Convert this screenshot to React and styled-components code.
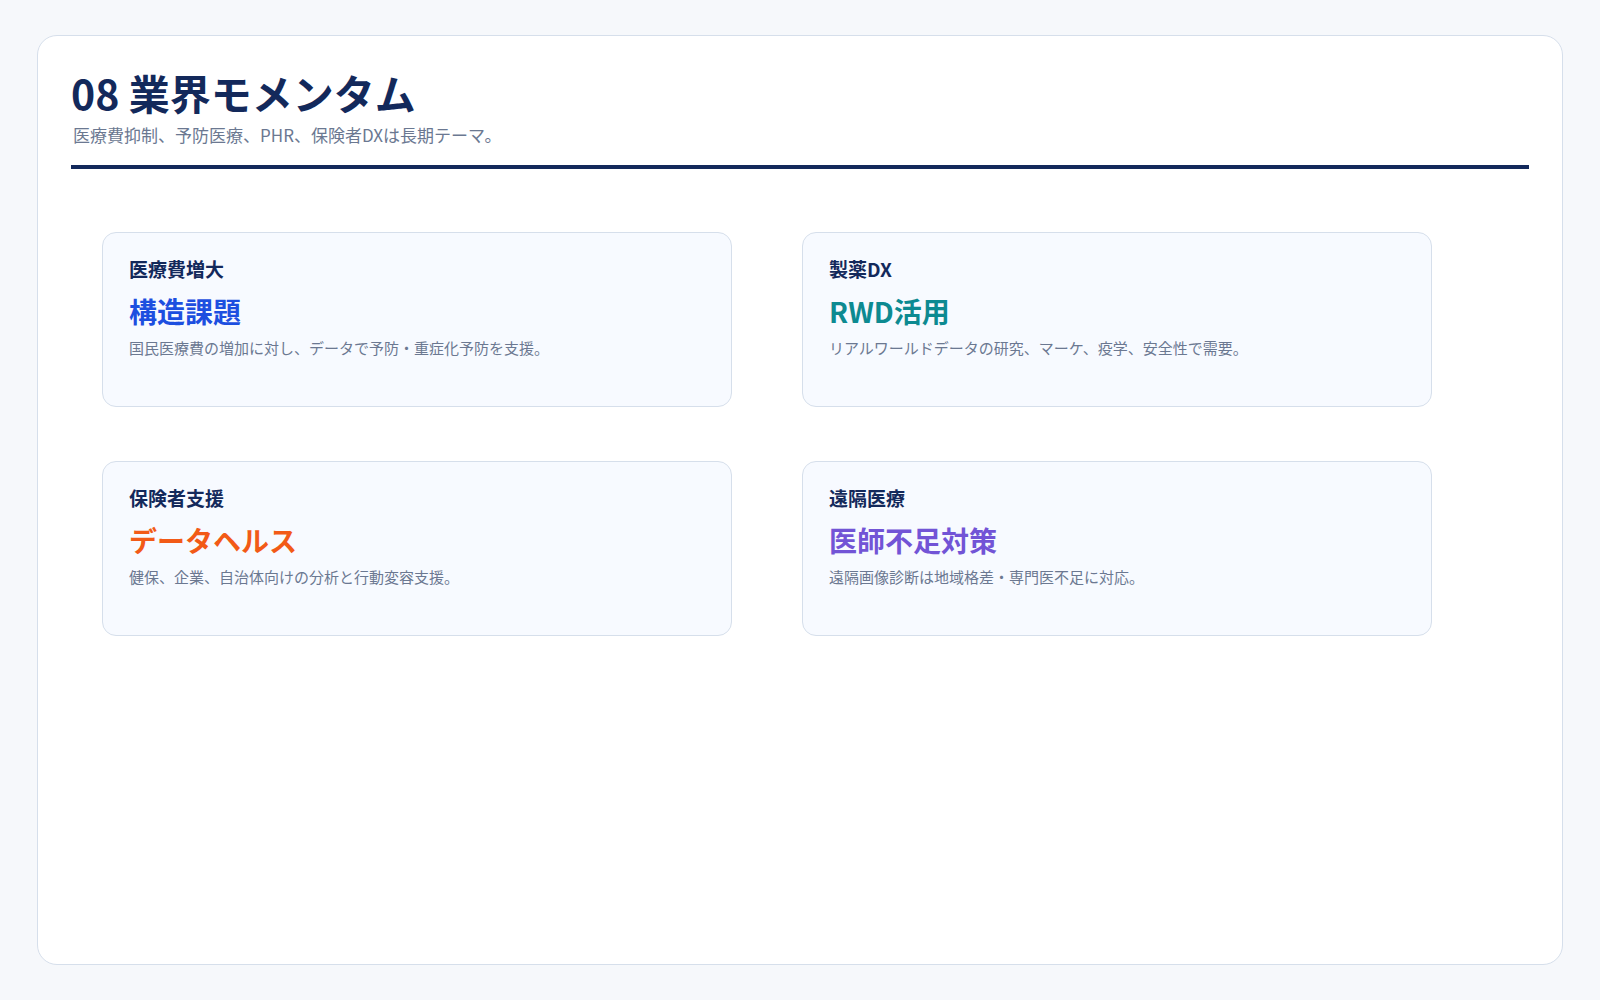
import React from "react";
import styled, { createGlobalStyle } from "styled-components";

const Global = createGlobalStyle`
  html, body { margin: 0; padding: 0; background: #f6f8fb; }
  body { font-family: "Noto Sans CJK JP", "Noto Sans", sans-serif; }
`;

const Page = styled.div`
  padding: 35px 37px;
  height: 1000px;
  box-sizing: border-box;
`;

const Panel = styled.div`
  background: #fff;
  border: 1.5px solid #d6dfeb;
  border-radius: 20px;
  height: 930px;
  box-sizing: border-box;
  padding: 30px 33px;
`;

const Title = styled.h1`
  margin: 0;
  font-size: 41px;
  font-weight: 700;
  color: #13295b;
  line-height: 1.3;
`;

const Subtitle = styled.p`
  margin: 4px 0 0 2px;
  font-size: 17px;
  color: #6b7891;
  line-height: 1.4;
`;

const Rule = styled.div`
  height: 4px;
  background: #13295b;
  margin-top: 18px;
`;

const Grid = styled.div`
  display: grid;
  grid-template-columns: 630px 630px;
  column-gap: 70px;
  row-gap: 54px;
  margin: 63px 0 0 31px;
`;

const Card = styled.div`
  background: #f7faff;
  border: 1.5px solid #d6dfeb;
  border-radius: 14px;
  height: 175px;
  box-sizing: border-box;
  padding: 23px 26px;
`;

const Label = styled.div`
  font-size: 19px;
  font-weight: 700;
  color: #13295b;
  line-height: 1.4;
`;

const Value = styled.div`
  font-size: 28px;
  font-weight: 700;
  color: ${p => p.$color};
  margin-top: 10px;
  line-height: 1.3;
`;

const Desc = styled.div`
  font-size: 15px;
  color: #6b7891;
  margin-top: 8px;
`;

const cards = [
  ["医療費増大", "構造課題", "#1d4fe0", "国民医療費の増加に対し、データで予防・重症化予防を支援。"],
  ["製薬DX", "RWD活用", "#0d8a91", "リアルワールドデータの研究、マーケ、疫学、安全性で需要。"],
  ["保険者支援", "データヘルス", "#f25a17", "健保、企業、自治体向けの分析と行動変容支援。"],
  ["遠隔医療", "医師不足対策", "#7254d6", "遠隔画像診断は地域格差・専門医不足に対応。"],
];

export default function App() {
  return (
    <Page>
      <Global />
      <Panel>
        <Title>08 業界モメンタム</Title>
        <Subtitle>医療費抑制、予防医療、PHR、保険者DXは長期テーマ。</Subtitle>
        <Rule />
        <Grid>
          {cards.map(([l, v, c, d]) => (
            <Card key={l}>
              <Label>{l}</Label>
              <Value $color={c}>{v}</Value>
              <Desc>{d}</Desc>
            </Card>
          ))}
        </Grid>
      </Panel>
    </Page>
  );
}
